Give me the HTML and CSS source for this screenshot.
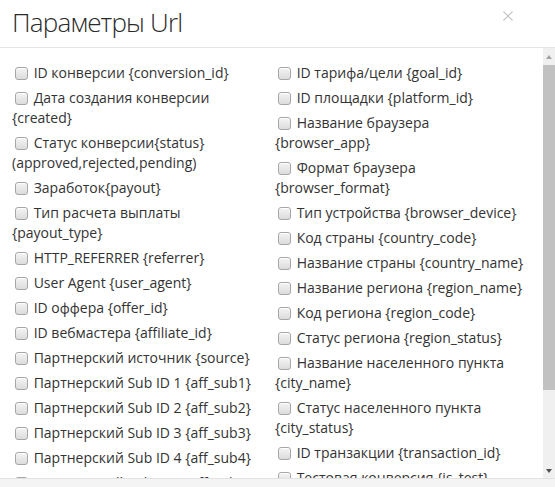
FILE: index.html
```html
<!DOCTYPE html>
<html lang="ru">
<head>
<meta charset="utf-8">
<title>Параметры Url</title>
<link rel="stylesheet" href="styles.css">
</head>
<body>
<div class="modal">
  <div class="modal-header">
    <h4 class="modal-title">Параметры Url</h4>
    <button class="close" type="button" aria-label="Закрыть">
      <svg width="10" height="10" viewBox="0 0 10 10"><path d="M0.5 0.5 L9.5 9.5 M9.5 0.5 L0.5 9.5" stroke="#c4c4c4" stroke-width="1.2" fill="none"/></svg>
    </button>
  </div>
  <div class="modal-main">
    <div class="modal-body">
      <div class="col">
        <label class="param"><input type="checkbox"> ID конверсии {conversion_id}</label>
        <label class="param"><input type="checkbox"> Дата создания конверсии {created}</label>
        <label class="param"><input type="checkbox"> Статус конверсии{status} (approved,rejected,pending)</label>
        <label class="param"><input type="checkbox"> Заработок{payout}</label>
        <label class="param"><input type="checkbox"> Тип расчета выплаты {payout_type}</label>
        <label class="param"><input type="checkbox"> HTTP_REFERRER {referrer}</label>
        <label class="param"><input type="checkbox"> User Agent {user_agent}</label>
        <label class="param"><input type="checkbox"> ID оффера {offer_id}</label>
        <label class="param"><input type="checkbox"> ID вебмастера {affiliate_id}</label>
        <label class="param"><input type="checkbox"> Партнерский источник {source}</label>
        <label class="param"><input type="checkbox"> Партнерский Sub ID 1 {aff_sub1}</label>
        <label class="param"><input type="checkbox"> Партнерский Sub ID 2 {aff_sub2}</label>
        <label class="param"><input type="checkbox"> Партнерский Sub ID 3 {aff_sub3}</label>
        <label class="param"><input type="checkbox"> Партнерский Sub ID 4 {aff_sub4}</label>
        <label class="param"><input type="checkbox"> Партнерский Sub ID 5 {aff_sub5}</label>
      </div>
      <div class="col">
        <label class="param"><input type="checkbox"> ID тарифа/цели {goal_id}</label>
        <label class="param"><input type="checkbox"> ID площадки {platform_id}</label>
        <label class="param"><input type="checkbox"> Название браузера {browser_app}</label>
        <label class="param"><input type="checkbox"> Формат браузера {browser_format}</label>
        <label class="param"><input type="checkbox"> Тип устройства {browser_device}</label>
        <label class="param"><input type="checkbox"> Код страны {country_code}</label>
        <label class="param"><input type="checkbox"> Название страны {country_name}</label>
        <label class="param"><input type="checkbox"> Название региона {region_name}</label>
        <label class="param"><input type="checkbox"> Код региона {region_code}</label>
        <label class="param"><input type="checkbox"> Статус региона {region_status}</label>
        <label class="param"><input type="checkbox"> Название населенного пункта {city_name}</label>
        <label class="param"><input type="checkbox"> Статус населенного пункта {city_status}</label>
        <label class="param"><input type="checkbox"> ID транзакции {transaction_id}</label>
        <label class="param"><input type="checkbox"> Тестовая конверсия {is_test}</label>
      </div>
    </div>
    <div class="scrollbar">
      <div class="sb-btn"><span class="arrow-up"></span></div>
      <div class="sb-thumb"></div>
      <div class="sb-track"></div>
      <div class="sb-btn"><span class="arrow-down"></span></div>
    </div>
  </div>
  <div class="modal-footer"></div>
</div>
</body>
</html>
```

FILE: styles.css
```css
* { box-sizing: border-box; }
html, body { margin: 0; padding: 0; background: #fff; }
body { font-family: "Open Sans", "Liberation Sans", sans-serif; color: #333; }

.modal {
  width: 555px;
  height: 487px;
  display: flex;
  flex-direction: column;
  overflow: hidden;
}

.modal-header {
  height: 48px;
  flex: none;
  display: flex;
  justify-content: space-between;
  align-items: flex-start;
  border-bottom: 1px solid #e5e5e5;
  padding: 5px 42px 0 12px;
}
.modal-title {
  margin: 0;
  font-family: "Open Sans", sans-serif;
  font-size: 26px;
  font-weight: 300;
  letter-spacing: -0.8px;
  line-height: 35px;
  color: #2a2a2a;
}
.close {
  border: 0;
  background: none;
  padding: 0;
  margin-top: 6px;
  width: 10px;
  height: 10px;
  display: flex;
}

.modal-main {
  flex: 1;
  display: flex;
  min-height: 0;
}
.modal-body {
  flex: 1;
  overflow: hidden;
  display: grid;
  grid-template-columns: 263px 263px;
  align-items: start;
  padding: 15px 0 0 12px;
}
.col {
  padding-right: 13px;
  display: flex;
  flex-direction: column;
}
.param {
  display: block;
  font-size: 14px;
  line-height: 20px;
  margin-bottom: 5px;
  color: #333;
}
.param input {
  -webkit-appearance: none;
  appearance: none;
  width: 13px;
  height: 13px;
  margin: 0 2px 0 3px;
  vertical-align: -2px;
  border: 1px solid #a6a6a6;
  border-radius: 3px;
  background: linear-gradient(#f4f4f4, #dcdcdc);
  box-shadow: inset 0 1px 0 #fff;
}

.scrollbar {
  width: 12px;
  flex: none;
  display: flex;
  flex-direction: column;
  background: #f0f0f0;
}
.sb-btn {
  height: 17px;
  flex: none;
  display: flex;
  align-items: center;
  justify-content: center;
}
.arrow-up {
  width: 0; height: 0;
  border-left: 3.5px solid transparent;
  border-right: 3.5px solid transparent;
  border-bottom: 4px solid #a3a3a3;
  margin-top: 1px;
}
.arrow-down {
  width: 0; height: 0;
  border-left: 3.5px solid transparent;
  border-right: 3.5px solid transparent;
  border-top: 4px solid #505050;
  margin-top: 3px;
}
.sb-thumb {
  height: 325px;
  flex: none;
  background: #c1c1c1;
}
.sb-track { flex: 1; }

.modal-footer {
  height: 9px;
  flex: none;
  border-top: 1px solid #e2e2e2;
  background: #f4f4f4;
}
```
